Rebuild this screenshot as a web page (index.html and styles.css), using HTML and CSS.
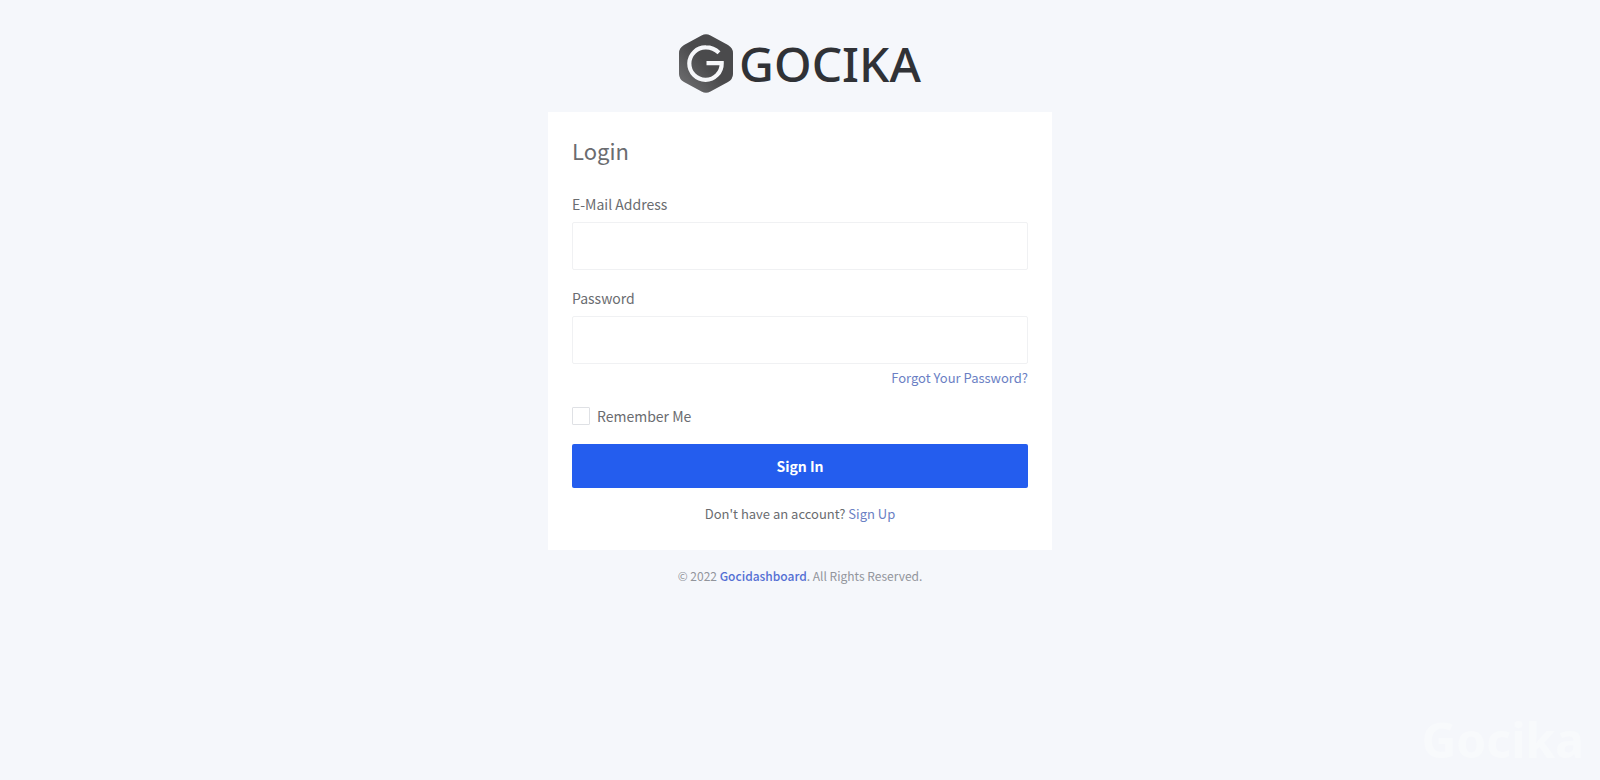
FILE: index.html
```html
<!DOCTYPE html>
<html lang="en">
<head>
<meta charset="utf-8">
<meta name="viewport" content="width=device-width, initial-scale=1">
<title>Login - Gocika</title>
<link rel="stylesheet" href="styles.css">
</head>
<body>
<main class="page">
  <div class="brand">
    <svg class="brand-mark" viewBox="0 0 54 60" aria-hidden="true">
      <defs>
        <linearGradient id="shade" x1="0" y1="1" x2="1" y2="0">
          <stop offset="0" stop-color="#747476"/>
          <stop offset="0.5" stop-color="#4a4a4c"/>
          <stop offset="1" stop-color="#4a4a4c"/>
        </linearGradient>
      </defs>
      <path fill="url(#shade)" d="M22.500 1.500Q27-1 31.500 1.500L49 11Q54 14 54 19V40Q54 45 49 48L31.500 57.500Q27 60 22.500 57.500L5 48Q0 45 0 40V19Q0 14 5 11Z"/>
      <path fill="none" stroke="#f6f7fa" stroke-width="4.200" d="M40 18.800C36 15 32 13.400 27 13.400A16.200 16.200 0 1 0 42.700 29.200H27.500"/>
    </svg>
    <span class="brand-name">GOCIKA</span>
  </div>
  <section class="card">
    <h1 class="title">Login</h1>
    <form>
      <div class="field">
        <label class="label" for="email">E-Mail Address</label>
        <input class="input" id="email" type="email">
      </div>
      <div class="field">
        <label class="label" for="password">Password</label>
        <input class="input" id="password" type="password">
      </div>
      <div class="forgot"><a class="link" href="#">Forgot Your Password?</a></div>
      <div class="remember">
        <input class="check" id="remember" type="checkbox">
        <label for="remember">Remember Me</label>
      </div>
      <button class="submit" type="submit">Sign In</button>
    </form>
    <p class="signup">Don't have an account? <a class="link" href="#">Sign Up</a></p>
  </section>
  <footer class="footer">© 2022 <a class="footer-link" href="#">Gocidashboard</a>. All Rights Reserved.</footer>
</main>
<div class="watermark" aria-hidden="true">Gocika</div>
</body>
</html>
```
FILE: styles.css
```css
* { box-sizing: border-box; }
body {
  margin: 0;
  min-height: 100vh;
  background: #f5f7fb;
  color: #6a6c70;
  font-family: "Noto Sans CJK SC", "Noto Sans", sans-serif;
  font-size: 14px;
  line-height: 24px;
}
a { text-decoration: none; }
.page {
  width: 100%;
  max-width: 504px;
  margin: 0 auto;
  padding-top: 32px;
}
.brand {
  display: flex;
  align-items: center;
  justify-content: center;
  gap: 6px;
  height: 64px;
  margin-bottom: 16px;
}
.brand-mark { width: 54px; height: 60px; }
.brand-name {
  color: #303236;
  font-family: "Noto Sans", sans-serif;
  font-size: 48px;
  font-weight: 500;
  line-height: 64px;
}
.card { padding: 24px; background: #fff; }
.title {
  margin: 0 0 28px;
  font-size: 22px;
  font-weight: 400;
  line-height: 28px;
}
.field { margin-bottom: 16px; }
.label { display: block; margin-bottom: 6px; }
.input {
  display: block;
  width: 100%;
  height: 48px;
  padding: 0 12px;
  border: 1px solid #f0f1f3;
  border-radius: 2px;
  background: #fff;
  color: inherit;
  font: inherit;
}
.forgot {
  margin-top: -12px;
  text-align: right;
  font-size: 13px;
  line-height: 20px;
}
.link { color: #6b7fc4; }
.remember {
  display: flex;
  align-items: center;
  gap: 7px;
  margin: 16px 0;
}
.check {
  appearance: none;
  width: 18px;
  height: 18px;
  margin: 0;
  border: 1px solid #dfe1e5;
  border-radius: 1px;
  background: #fff;
}
.check:checked { background: #245dee; }
.submit {
  display: block;
  width: 100%;
  height: 44px;
  border: 0;
  border-radius: 2px;
  background: #245dee;
  color: #fff;
  font: inherit;
  font-weight: 700;
}
.signup {
  margin: 14px 0 0;
  text-align: center;
  font-size: 13px;
}
.footer {
  margin-top: 14px;
  color: #92959c;
  text-align: center;
  font-size: 12px;
}
.footer-link { color: #5470d4; font-weight: 500; }
.watermark {
  position: fixed;
  right: 16px;
  bottom: 8px;
  color: #f8fafc;
  font-family: "Noto Sans", sans-serif;
  font-size: 48px;
  font-weight: 700;
  line-height: 64px;
  pointer-events: none;
}
```
